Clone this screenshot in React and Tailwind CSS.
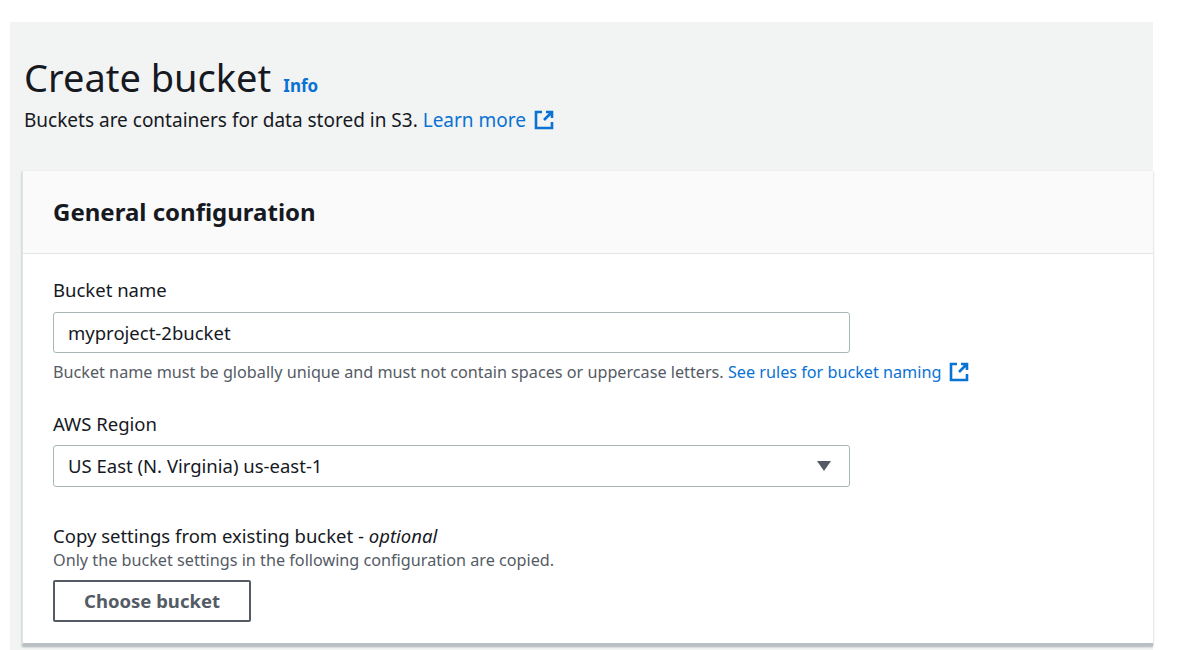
const Ext = () => (
  <svg width="20" height="20" viewBox="0 0 20 20" className="inline-block ml-2 -mt-1" fill="none" stroke="#0972d3" strokeWidth="2.6">
    <path d="M8 2H2v16h16v-6" />
    <path d="M12 2h6v6M18 2l-8 8" />
  </svg>
);

export default function App() {
  return (
    <div className="w-[1200px] h-[650px] bg-white pt-[22px] pl-[10px] overflow-hidden" style={{ fontFamily: '"Noto Sans", "Open Sans", sans-serif' }}>
      <div className="w-[1143px] h-[630px] bg-[#f2f3f3] pl-[14px] text-[#16191f]">
        <div className="pt-[30px] flex items-baseline">
          <h1 className="text-[38px] leading-[50px] font-normal">Create bucket</h1>
          <span className="ml-3 text-[17px] font-bold text-[#0972d3]">Info</span>
        </div>
        <p className="text-[19px] mt-[4px] leading-7">
          Buckets are containers for data stored in S3. <span className="text-[#0972d3]">Learn more<Ext /></span>
        </p>
        <div className="mt-[37px] ml-[-2px] bg-white h-[475px] border-l border-[#e0e2e4] shadow-[0_1px_2px_rgba(0,28,36,0.3)] border-b-[3px] border-b-[#b9bfc2]">
          <div className="h-[83px] bg-[#fafafa] border-b border-[#e3e5e7] flex items-center px-[30px]">
            <h2 className="text-[24px] font-bold">General configuration</h2>
          </div>
          <div className="px-[30px] pt-[22px]">
            <div className="text-[18.5px] leading-7">Bucket name</div>
            <div className="mt-[8px] w-[797px] h-[41px] border border-[#aab7b8] rounded-[3px] flex items-center px-[14px] text-[18.5px]">myproject-2bucket</div>
            <p className="mt-[7px] text-[16.2px] text-[#545b64]">
              Bucket name must be globally unique and must not contain spaces or uppercase letters. <span className="text-[#0972d3]">See rules for bucket naming<Ext /></span>
            </p>
            <div className="mt-[26px] text-[18.5px] leading-7">AWS Region</div>
            <div className="mt-[7px] w-[797px] h-[42px] border border-[#aab7b8] rounded-[3px] flex items-center justify-between px-[14px] text-[18.5px]">
              <span>US East (N. Virginia) us-east-1</span>
              <svg width="16" height="12" viewBox="0 0 16 12" className="mr-[3px]"><path d="M1 1h14l-7 10z" fill="#545b64" /></svg>
            </div>
            <div className="mt-[37px] text-[18.5px] leading-6">Copy settings from existing bucket - <i>optional</i></div>
            <p className="text-[16.2px] text-[#545b64] leading-6">Only the bucket settings in the following configuration are copied.</p>
            <button className="mt-[8px] w-[198px] h-[42px] border-2 border-[#545b64] rounded-[2px] text-[18.5px] font-bold text-[#545b64]">Choose bucket</button>
          </div>
        </div>
      </div>
    </div>
  );
}
